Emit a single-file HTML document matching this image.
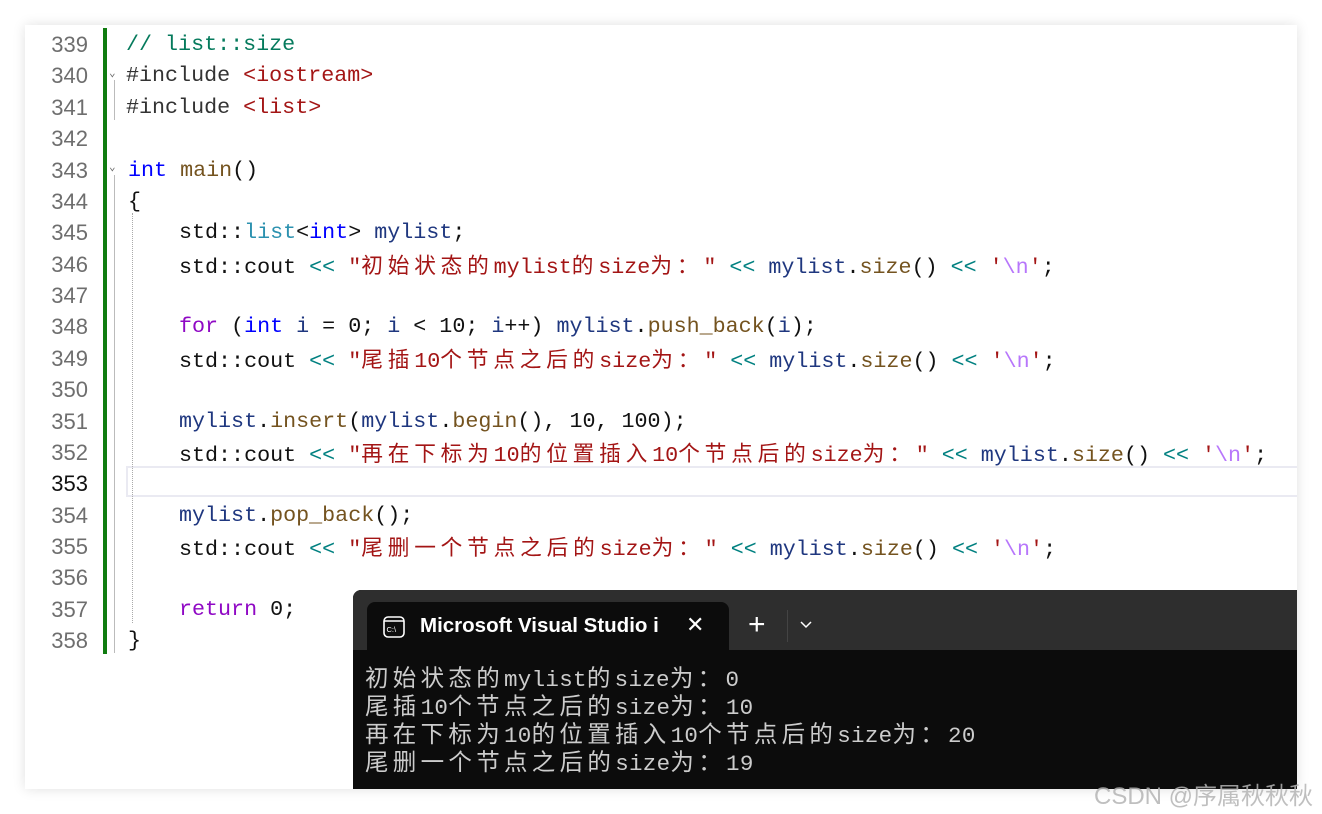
<!DOCTYPE html>
<html><head><meta charset="utf-8"><style>
*{margin:0;padding:0;box-sizing:border-box}
body{width:1322px;height:814px;background:#fff;position:relative;overflow:hidden;font-family:"Liberation Mono","Noto Sans CJK SC",monospace}
#card{position:absolute;left:25px;top:25px;width:1272px;height:764px;background:#fff;box-shadow:0 0 12px rgba(0,0,0,0.12)}
.ln{position:absolute;left:30px;width:58px;text-align:right;color:#6e6e6e;font-family:"Liberation Sans",sans-serif;font-size:22px;line-height:31.37px}
.cd{position:absolute;left:126px;white-space:pre;font-size:21.7px;line-height:31.37px;color:#111}
.c{font-family:"Noto Sans CJK SC",sans-serif;letter-spacing:4.8px}
.k{color:#0000ff}.p{color:#8f08c4}.s{color:#a31515}.v{color:#1f377f}.f{color:#74531f}.t{color:#2b91af}.o{color:#008080}.e{color:#b776fb}.cm{color:#057a5c}.g{color:#333}
#bar{position:absolute;left:103px;top:28px;width:4px;height:626px;background:#107c10}
#term{position:absolute;left:353px;top:590px;width:944px;height:199px;background:#0c0c0c;border-radius:8px 0 0 0;overflow:hidden}
#tb{position:absolute;left:0;top:0;width:944px;height:60px;background:#2e2e2e}
#tab{position:absolute;left:14px;top:12px;width:362px;height:48px;background:#0c0c0c;border-radius:8px 8px 0 0}
.tt{position:absolute;color:#fff;font-family:"Liberation Sans",sans-serif;font-size:21px}
.out{position:absolute;left:12px;white-space:pre;color:#cccccc;font-size:22.5px;line-height:28px;letter-spacing:0.3px}
.out .c{font-family:"Noto Sans CJK SC",sans-serif;letter-spacing:4.3px;font-size:23.5px}
</style></head><body>
<div id="card"></div>
<div id="bar"></div>
<div class="ln" style="top:29px">339</div><div class="ln" style="top:60px">340</div><div class="ln" style="top:92px">341</div><div class="ln" style="top:123px">342</div><div class="ln" style="top:155px">343</div><div class="ln" style="top:186px">344</div><div class="ln" style="top:217px">345</div><div class="ln" style="top:249px">346</div><div class="ln" style="top:280px">347</div><div class="ln" style="top:311px">348</div><div class="ln" style="top:343px">349</div><div class="ln" style="top:374px">350</div><div class="ln" style="top:406px">351</div><div class="ln" style="top:437px">352</div><div class="ln" style="top:468px;color:#111">353</div><div class="ln" style="top:500px">354</div><div class="ln" style="top:531px">355</div><div class="ln" style="top:562px">356</div><div class="ln" style="top:594px">357</div><div class="ln" style="top:625px">358</div>
<div style="position:absolute;left:126px;top:466px;width:1171px;height:31px;border:2px solid #eaeaf2;border-right:none"></div>
<div style="position:absolute;left:114px;top:80px;width:1px;height:40px;background:#bbb"></div>
<div style="position:absolute;left:114px;top:175px;width:1px;height:478px;background:#bbb"></div>
<div style="position:absolute;left:132px;top:213px;width:0;height:410px;border-left:1px dotted #aaa"></div>
<div style="position:absolute;left:109px;top:66px;color:#666;font-size:11px">&#8964;</div>
<div style="position:absolute;left:109px;top:160px;color:#666;font-size:11px">&#8964;</div>
<div class="cd" style="top:29px"><span class="cm">// list::size</span></div>
<div class="cd" style="top:60px"><span class="g">#include</span> <span class="s">&lt;iostream&gt;</span></div>
<div class="cd" style="top:92px"><span class="g">#include</span> <span class="s">&lt;list&gt;</span></div>
<div class="cd" style="top:155px;left:128px"><span class="k">int</span> <span class="f">main</span>()</div>
<div class="cd" style="top:186px;left:128px">{</div>
<div class="cd" style="top:217px;left:179px">std::<span class="t">list</span>&lt;<span class="k">int</span>&gt; <span class="v">mylist</span>;</div>
<div class="cd" style="top:249px;left:179px">std::cout <span class="o">&lt;&lt;</span> <span class="s">"<span class="c">初始状态的</span>mylist<span class="c">的</span>size<span class="c">为：</span>"</span> <span class="o">&lt;&lt;</span> <span class="v">mylist</span>.<span class="f">size</span>() <span class="o">&lt;&lt;</span> <span class="s">'<span class="e">\n</span>'</span>;</div>
<div class="cd" style="top:311px;left:179px"><span class="p">for</span> (<span class="k">int</span> <span class="v">i</span> = 0; <span class="v">i</span> &lt; 10; <span class="v">i</span>++) <span class="v">mylist</span>.<span class="f">push_back</span>(<span class="v">i</span>);</div>
<div class="cd" style="top:343px;left:179px">std::cout <span class="o">&lt;&lt;</span> <span class="s">"<span class="c">尾插</span>10<span class="c">个节点之后的</span>size<span class="c">为：</span>"</span> <span class="o">&lt;&lt;</span> <span class="v">mylist</span>.<span class="f">size</span>() <span class="o">&lt;&lt;</span> <span class="s">'<span class="e">\n</span>'</span>;</div>
<div class="cd" style="top:406px;left:179px"><span class="v">mylist</span>.<span class="f">insert</span>(<span class="v">mylist</span>.<span class="f">begin</span>(), 10, 100);</div>
<div class="cd" style="top:437px;left:179px">std::cout <span class="o">&lt;&lt;</span> <span class="s">"<span class="c">再在下标为</span>10<span class="c">的位置插入</span>10<span class="c">个节点后的</span>size<span class="c">为：</span>"</span> <span class="o">&lt;&lt;</span> <span class="v">mylist</span>.<span class="f">size</span>() <span class="o">&lt;&lt;</span> <span class="s">'<span class="e">\n</span>'</span>;</div>
<div class="cd" style="top:500px;left:179px"><span class="v">mylist</span>.<span class="f">pop_back</span>();</div>
<div class="cd" style="top:531px;left:179px">std::cout <span class="o">&lt;&lt;</span> <span class="s">"<span class="c">尾删一个节点之后的</span>size<span class="c">为：</span>"</span> <span class="o">&lt;&lt;</span> <span class="v">mylist</span>.<span class="f">size</span>() <span class="o">&lt;&lt;</span> <span class="s">'<span class="e">\n</span>'</span>;</div>
<div class="cd" style="top:594px;left:179px"><span class="p">return</span> 0;</div>
<div class="cd" style="top:625px;left:128px">}</div>
<div id="term">
 <div id="tb"></div>
 <div id="tab"></div>
 <svg style="position:absolute;left:30px;top:26px" width="22" height="22" viewBox="0 0 22 22"><rect x="1" y="1" width="20" height="20" rx="4" fill="none" stroke="#fff" stroke-width="1.6"/><line x1="1" y1="5" x2="21" y2="5" stroke="#fff" stroke-width="1.4"/><text x="3.5" y="16" fill="#fff" font-size="7.5" font-family="Liberation Sans">C:\</text></svg>
 <div class="tt" style="left:67px;top:24px;font-weight:bold;font-size:20.5px">Microsoft Visual Studio i</div>
 <div class="tt" style="left:333px;top:22px;font-size:22px">✕</div>
 <div class="tt" style="left:395px;top:18px;font-size:30px;font-weight:300">+</div>
 <div style="position:absolute;left:434px;top:20px;width:1px;height:32px;background:#444"></div>
 <svg style="position:absolute;left:447px;top:31px" width="12" height="8"><path d="M1 1 L6 6 L11 1" fill="none" stroke="#fff" stroke-width="1.5"/></svg>
 <div class="out" style="top:72px"><span class="c">初始状态的</span>mylist<span class="c">的</span>size<span class="c">为：</span>0</div>
 <div class="out" style="top:100px"><span class="c">尾插</span>10<span class="c">个节点之后的</span>size<span class="c">为：</span>10</div>
 <div class="out" style="top:128px"><span class="c">再在下标为</span>10<span class="c">的位置插入</span>10<span class="c">个节点后的</span>size<span class="c">为：</span>20</div>
 <div class="out" style="top:156px"><span class="c">尾删一个节点之后的</span>size<span class="c">为：</span>19</div>
</div>
<div style="position:absolute;left:1094px;top:776px;color:rgba(180,180,180,0.85);font-family:'Liberation Sans','Noto Sans CJK SC',sans-serif;font-size:24px;white-space:nowrap">CSDN @序属秋秋秋</div>
</body></html>
